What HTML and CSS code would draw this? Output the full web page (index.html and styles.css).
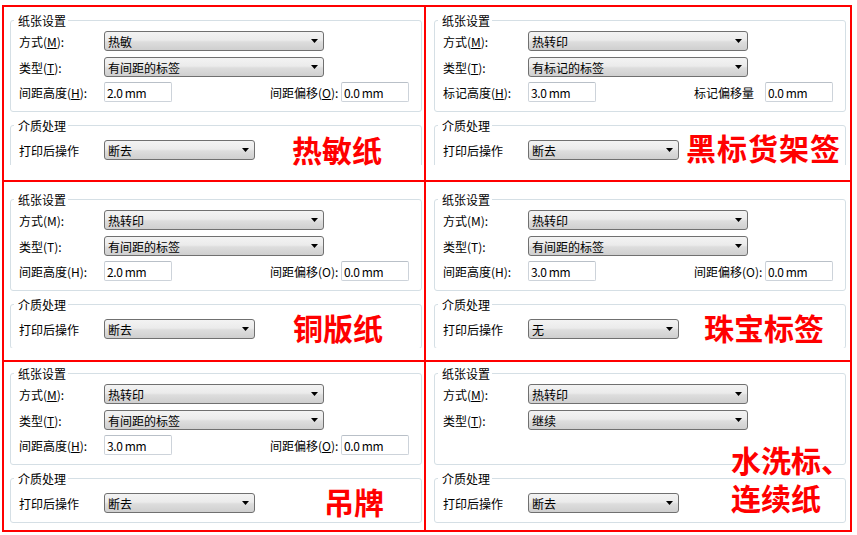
FILE: index.html
```html
<!DOCTYPE html>
<html lang="zh-CN">
<head>
<meta charset="utf-8">
<title>纸张设置</title>
<link rel="stylesheet" href="styles.css">
</head>
<body>
<div class="board">

  <!-- Row 1, left: 热敏纸 -->
  <div class="cell r1 c1">
    <div class="dialog">
      <fieldset class="group paper">
        <legend>纸张设置</legend>
        <div class="row"><span class="lbl">方式(<u>M</u>):</span><div class="combo wide"><span>热敏</span><svg class="arrow" width="7" height="4" viewBox="0 0 7 4"><path d="M0 0H7L3.5 4Z"/></svg></div></div>
        <div class="row"><span class="lbl">类型(<u>T</u>):</span><div class="combo wide"><span>有间距的标签</span><svg class="arrow" width="7" height="4" viewBox="0 0 7 4"><path d="M0 0H7L3.5 4Z"/></svg></div></div>
        <div class="row fields"><span class="lbl">间距高度(<u>H</u>):</span><div class="field">2.0 mm</div><span class="lbl2">间距偏移(<u>O</u>):</span><div class="field">0.0 mm</div></div>
      </fieldset>
      <fieldset class="group media">
        <legend>介质处理</legend>
        <div class="row"><span class="lbl">打印后操作</span><div class="combo narrow"><span>断去</span><svg class="arrow" width="7" height="4" viewBox="0 0 7 4"><path d="M0 0H7L3.5 4Z"/></svg></div></div>
      </fieldset>
    </div>
    <div class="tag tag-thermal">热敏纸</div>
  </div>

  <!-- Row 1, right: 黑标货架签 -->
  <div class="cell r1 c2">
    <div class="dialog">
      <fieldset class="group paper">
        <legend>纸张设置</legend>
        <div class="row"><span class="lbl">方式(<u>M</u>):</span><div class="combo wide"><span>热转印</span><svg class="arrow" width="7" height="4" viewBox="0 0 7 4"><path d="M0 0H7L3.5 4Z"/></svg></div></div>
        <div class="row"><span class="lbl">类型(<u>T</u>):</span><div class="combo wide"><span>有标记的标签</span><svg class="arrow" width="7" height="4" viewBox="0 0 7 4"><path d="M0 0H7L3.5 4Z"/></svg></div></div>
        <div class="row fields"><span class="lbl">标记高度(<u>H</u>):</span><div class="field">3.0 mm</div><span class="lbl2">标记偏移量</span><div class="field">0.0 mm</div></div>
      </fieldset>
      <fieldset class="group media">
        <legend>介质处理</legend>
        <div class="row"><span class="lbl">打印后操作</span><div class="combo narrow"><span>断去</span><svg class="arrow" width="7" height="4" viewBox="0 0 7 4"><path d="M0 0H7L3.5 4Z"/></svg></div></div>
      </fieldset>
    </div>
    <div class="tag tag-blackmark">黑标货架签</div>
  </div>

  <!-- Row 2, left: 铜版纸 -->
  <div class="cell r2 c1">
    <div class="dialog">
      <fieldset class="group paper">
        <legend>纸张设置</legend>
        <div class="row"><span class="lbl">方式(M):</span><div class="combo wide"><span>热转印</span><svg class="arrow" width="7" height="4" viewBox="0 0 7 4"><path d="M0 0H7L3.5 4Z"/></svg></div></div>
        <div class="row"><span class="lbl">类型(T):</span><div class="combo wide"><span>有间距的标签</span><svg class="arrow" width="7" height="4" viewBox="0 0 7 4"><path d="M0 0H7L3.5 4Z"/></svg></div></div>
        <div class="row fields"><span class="lbl">间距高度(H):</span><div class="field">2.0 mm</div><span class="lbl2">间距偏移(O):</span><div class="field">0.0 mm</div></div>
      </fieldset>
      <fieldset class="group media">
        <legend>介质处理</legend>
        <div class="row"><span class="lbl">打印后操作</span><div class="combo narrow"><span>断去</span><svg class="arrow" width="7" height="4" viewBox="0 0 7 4"><path d="M0 0H7L3.5 4Z"/></svg></div></div>
      </fieldset>
    </div>
    <div class="tag tag-coated">铜版纸</div>
  </div>

  <!-- Row 2, right: 珠宝标签 -->
  <div class="cell r2 c2">
    <div class="dialog">
      <fieldset class="group paper">
        <legend>纸张设置</legend>
        <div class="row"><span class="lbl">方式(M):</span><div class="combo wide"><span>热转印</span><svg class="arrow" width="7" height="4" viewBox="0 0 7 4"><path d="M0 0H7L3.5 4Z"/></svg></div></div>
        <div class="row"><span class="lbl">类型(T):</span><div class="combo wide"><span>有间距的标签</span><svg class="arrow" width="7" height="4" viewBox="0 0 7 4"><path d="M0 0H7L3.5 4Z"/></svg></div></div>
        <div class="row fields"><span class="lbl">间距高度(H):</span><div class="field">3.0 mm</div><span class="lbl2">间距偏移(O):</span><div class="field">0.0 mm</div></div>
      </fieldset>
      <fieldset class="group media">
        <legend>介质处理</legend>
        <div class="row"><span class="lbl">打印后操作</span><div class="combo narrow"><span>无</span><svg class="arrow" width="7" height="4" viewBox="0 0 7 4"><path d="M0 0H7L3.5 4Z"/></svg></div></div>
      </fieldset>
    </div>
    <div class="tag tag-jewel">珠宝标签</div>
  </div>

  <!-- Row 3, left: 吊牌 -->
  <div class="cell r3 c1">
    <div class="dialog">
      <fieldset class="group paper">
        <legend>纸张设置</legend>
        <div class="row"><span class="lbl">方式(<u>M</u>):</span><div class="combo wide"><span>热转印</span><svg class="arrow" width="7" height="4" viewBox="0 0 7 4"><path d="M0 0H7L3.5 4Z"/></svg></div></div>
        <div class="row"><span class="lbl">类型(<u>T</u>):</span><div class="combo wide"><span>有间距的标签</span><svg class="arrow" width="7" height="4" viewBox="0 0 7 4"><path d="M0 0H7L3.5 4Z"/></svg></div></div>
        <div class="row fields"><span class="lbl">间距高度(<u>H</u>):</span><div class="field">3.0 mm</div><span class="lbl2">间距偏移(<u>O</u>):</span><div class="field">0.0 mm</div></div>
      </fieldset>
      <fieldset class="group media">
        <legend>介质处理</legend>
        <div class="row"><span class="lbl">打印后操作</span><div class="combo narrow"><span>断去</span><svg class="arrow" width="7" height="4" viewBox="0 0 7 4"><path d="M0 0H7L3.5 4Z"/></svg></div></div>
      </fieldset>
    </div>
    <div class="tag tag-hangtag">吊牌</div>
  </div>

  <!-- Row 3, right: 水洗标、连续纸 -->
  <div class="cell r3 c2">
    <div class="dialog">
      <fieldset class="group paper">
        <legend>纸张设置</legend>
        <div class="row"><span class="lbl">方式(<u>M</u>):</span><div class="combo wide"><span>热转印</span><svg class="arrow" width="7" height="4" viewBox="0 0 7 4"><path d="M0 0H7L3.5 4Z"/></svg></div></div>
        <div class="row"><span class="lbl">类型(<u>T</u>):</span><div class="combo wide"><span>继续</span><svg class="arrow" width="7" height="4" viewBox="0 0 7 4"><path d="M0 0H7L3.5 4Z"/></svg></div></div>
        <div class="row fields empty"></div>
      </fieldset>
      <fieldset class="group media">
        <legend>介质处理</legend>
        <div class="row"><span class="lbl">打印后操作</span><div class="combo narrow"><span>断去</span><svg class="arrow" width="7" height="4" viewBox="0 0 7 4"><path d="M0 0H7L3.5 4Z"/></svg></div></div>
      </fieldset>
    </div>
    <div class="tag tag-wash"><span class="tag-line">水洗标、</span><span class="tag-line">连续纸</span></div>
  </div>

</div>
</body>
</html>
```

FILE: styles.css
```css
html, body {
  margin: 0;
  padding: 0;
  background: #fff;
}

body {
  font-family: "Noto Sans CJK SC", "Noto Sans", sans-serif;
  font-size: 12px;
  color: #000;
}

.board {
  display: grid;
  grid-template-columns: 420px 424px;
  grid-template-rows: 173px 178px 168px;
  gap: 2px;
  padding: 2px;
  background: #f00;
  width: max-content;
  margin: 5px 0 0 2px;
}

.cell {
  background: #fff;
  position: relative;
  overflow: hidden;
}

.dialog {
  overflow: hidden;
  width: 412px;
}

.c1 .dialog { padding-left: 6px; }
.c2 .dialog { padding-left: 8px; }

.r1 .dialog { padding-top: 6px; height: 152px; }
.r2 .dialog { padding-top: 10px; height: 156px; }
.r3 .dialog { padding-top: 4px; height: 157px; }

.group {
  box-sizing: border-box;
  width: 412px;
  margin: 0;
  min-width: 0;
  border: 1px solid #d5dfe5;
  border-radius: 3px;
  padding: 3px 11px 9px 8px;
}

.group legend {
  font-size: 12px;
  line-height: 15px;
  padding: 0 2px 0 4px;
  margin-left: -5px;
}

.media {
  margin-top: 6px;
  padding-top: 7px;
}

.row {
  display: flex;
  align-items: center;
  height: 20px;
}

.row + .row { margin-top: 6px; }
.row.fields { margin-top: 5px; }

.lbl {
  width: 85px;
  flex: none;
  white-space: nowrap;
}

.lbl2 {
  width: 71px;
  margin-left: 98px;
  flex: none;
  white-space: nowrap;
}

u {
  text-decoration: underline;
  text-underline-offset: 1px;
}

.combo {
  box-sizing: border-box;
  height: 20px;
  border: 1px solid #707070;
  border-radius: 3px;
  background: linear-gradient(#f3f3f3 0%, #ebebeb 45%, #dddddd 55%, #cfcfcf 100%);
  display: flex;
  align-items: center;
  justify-content: space-between;
  padding: 0 5px 0 3px;
  flex: none;
}

.combo.wide { width: 220px; }
.combo.narrow { width: 151px; }

.arrow {
  display: block;
  fill: #000;
}

.field {
  box-sizing: border-box;
  width: 68px;
  height: 20px;
  border: 1px solid #cdd3da;
  border-top-color: #b9c0c8;
  border-radius: 2px;
  background: #fff;
  padding-left: 2px;
  display: flex;
  align-items: center;
  letter-spacing: -0.4px;
  flex: none;
}

.tag {
  position: absolute;
  font-family: "Noto Sans CJK SC", sans-serif;
  font-weight: bold;
  font-size: 30px;
  line-height: 30px;
  color: #f00;
  white-space: nowrap;
}

.tag-thermal   { left: 288px; top: 127px; }
.tag-blackmark { left: 260px; top: 125px; letter-spacing: 1px; }
.tag-coated    { left: 289px; top: 130px; }
.tag-jewel     { left: 278px; top: 130px; }
.tag-hangtag   { left: 320px; top: 124px; }
.tag-wash      { left: 305px; top: 82px; }

.tag-line {
  display: block;
  height: 30px;
}

.tag-line + .tag-line { margin-top: 8px; }
```
